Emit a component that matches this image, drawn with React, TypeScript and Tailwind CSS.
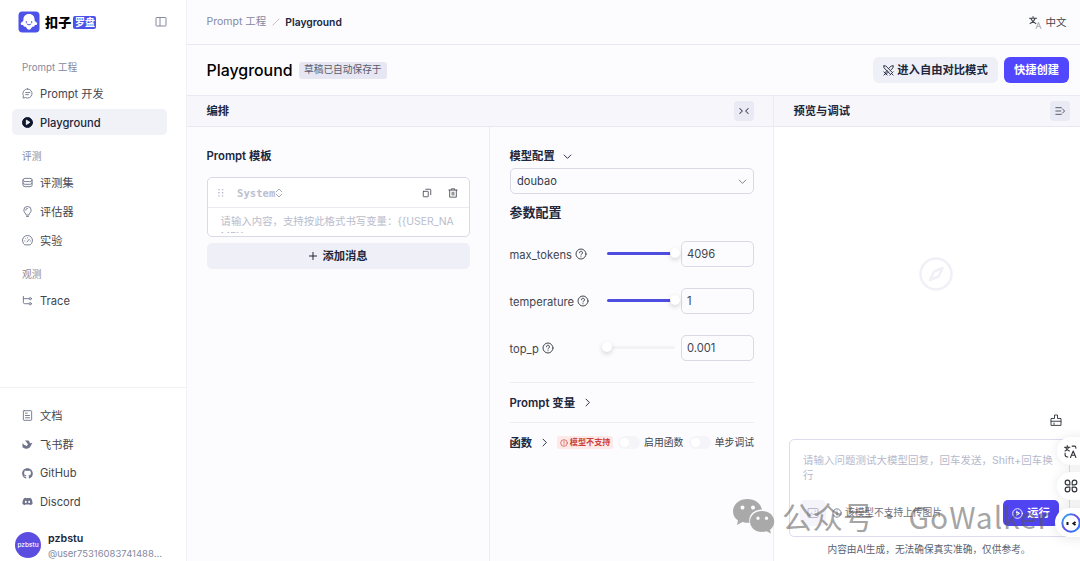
import React from 'react';
import { FaDiscord, FaGithub } from 'react-icons/fa';

interface IconProps {
  className?: string;
  children: React.ReactNode;
}

// Outline icons share a 24 unit grid
function Icon({ className = 'size-[11px]', children }: IconProps) {
  return (
    <svg
      viewBox="0 0 24 24"
      fill="none"
      stroke="currentColor"
      strokeWidth="2"
      strokeLinecap="round"
      strokeLinejoin="round"
      className={`shrink-0 ${className}`}
    >
      {children}
    </svg>
  );
}

function Label({ children }: { children: React.ReactNode }) {
  return <span className="pt-[2px]">{children}</span>;
}

const ChatIcon = () => (
  <Icon>
    <path d="M12 2a10 10 0 1 1-4.500 19L2.500 22l.6-5.200A10 10 0 0 1 12 2zM8 10h9M8 14.500h6" />
  </Icon>
);

const PlayIcon = () => (
  <Icon>
    <circle cx="12" cy="12" r="11" fill="currentColor" />
    <path d="M9.500 7.500v9l7-4.500z" fill="white" stroke="white" />
  </Icon>
);

const DatabaseIcon = () => (
  <Icon>
    <path d="M2 6q0-3 5-3h10q5 0 5 3v12q0 3-5 3H7q-5 0-5-3zM2 7q0 3 5 3h10q5 0 5-3M2 13q0 3 5 3h10q5 0 5-3" />
  </Icon>
);

const BulbIcon = () => (
  <Icon>
    <path d="M9 19c0-3-5-4-5-10a8 8 0 0 1 16 0c0 6-5 7-5 10zM10 23h4M8 9a4 4 0 0 1 4-4" />
  </Icon>
);

const GaugeIcon = () => (
  <Icon>
    <path d="M5.500 21a11 11 0 1 1 13 0zM11 15l5-6M6 13h.5M8 8l.5.5M12 6v.5M18 13h.5" />
  </Icon>
);

const TraceIcon = () => (
  <Icon>
    <path d="M3 3v13q0 3 3 3h9M3 8h12" />
    <circle cx="18" cy="8" r="2.500" />
    <circle cx="18" cy="19" r="2.500" />
  </Icon>
);

const DocIcon = () => (
  <Icon>
    <rect x="3" y="1.500" width="18" height="21" rx="1.500" />
    <path d="M7.500 7h4M7.500 12h9M7.500 17h9" />
  </Icon>
);

const FeishuIcon = () => (
  <Icon>
    <path
      d="M6 3h8c2 2 3 4 3.500 6l5.500-1c-2 2-3 6-5 9-4 6-12 5-17 1V9c3 3 6 5 9 6l3-3C11 8 9 5 6 3z"
      fill="currentColor"
      stroke="none"
    />
  </Icon>
);

const TranslateIcon = ({ className }: { className?: string }) => (
  <Icon className={className}>
    <path d="M1 4h13M7.500 1v3M2 14c5-2 8-6 9.500-10M3.500 5c2 4 5 7 9 9" />
    <path d="m13 23 4.500-11L22 23M14.500 19.500h6" className="opacity-40" />
  </Icon>
);

const NAV_GROUPS = [
  {
    title: 'Prompt 工程',
    items: [
      { label: 'Prompt 开发', icon: <ChatIcon /> },
      { label: 'Playground', icon: <PlayIcon />, active: true },
    ],
  },
  {
    title: '评测',
    items: [
      { label: '评测集', icon: <DatabaseIcon /> },
      { label: '评估器', icon: <BulbIcon /> },
      { label: '实验', icon: <GaugeIcon /> },
    ],
  },
  {
    title: '观测',
    items: [{ label: 'Trace', icon: <TraceIcon /> }],
  },
];

const LINKS = [
  { label: '文档', icon: <DocIcon /> },
  { label: '飞书群', icon: <FeishuIcon /> },
  { label: 'GitHub', icon: <FaGithub className="size-[11px]" /> },
  { label: 'Discord', icon: <FaDiscord className="size-[11px]" /> },
];

const PARAMS = [
  { name: 'max_tokens', value: '4096', percent: 100 },
  { name: 'temperature', value: '1', percent: 100 },
  { name: 'top_p', value: '0.001', percent: 0 },
];

interface NavItemProps {
  label: string;
  icon: React.ReactNode;
  active?: boolean;
}

function NavItem({ label, icon, active }: NavItemProps) {
  return (
    <a
      className={`flex h-[26px] items-center gap-[7px] rounded-[5px] px-[10px] text-[11.200px] ${
        active ? 'bg-[#f1f2f7] font-medium text-[#20263b]' : 'text-[#42464e]'
      }`}
    >
      <span className={`flex ${active ? 'text-[#0f172f]' : 'text-[#6f748c]'}`}>{icon}</span>
      <Label>{label}</Label>
    </a>
  );
}

function Sidebar() {
  return (
    <aside className="flex w-[187px] shrink-0 flex-col border-r border-[#f0f0f5] bg-white">
      <div className="flex h-[44px] shrink-0 items-center pr-[19px] pl-[18px]">
        <svg viewBox="0 0 22 22" className="size-[22px]">
          <rect x="0.500" y="0.500" width="21" height="21" rx="4" fill="#4d53e8" />
          <path
            d="M11 3c3.800 0 5.600 2.500 5.600 5.700 0 1 .2 1.700 1.400 2.300 2 1 1.500 3.500-1.200 3-.2 1.500-1.200 2-2.200 1.500-.7 1-1.500 1.500-1.800 2.500-1 .9-2.600.9-3.600 0-.3-1-1.100-1.500-1.800-2.500-1 .5-2 0-2.200-1.500-2.700.5-3.200-2-1.200-3 1.200-.6 1.400-1.300 1.400-2.300C5.400 5.500 7.200 3 11 3z"
            fill="white"
          />
          <path
            d="M8.300 10.500v1M13.700 10.500v1M9 13c1 1.200 3 1.200 4 0"
            fill="none"
            stroke="#4d53e8"
            strokeWidth="1"
            strokeLinecap="round"
          />
        </svg>
        <span className="ml-[5px] text-[13px] font-black tracking-[0.200px] text-black">扣子</span>
        <span className="ml-[2px] flex h-[13px] items-center rounded-[2px] bg-[#4d53e8] px-[1.500px] text-[10px] font-bold text-white">
          罗盘
        </span>
        <span className="ml-auto text-[#8489a0]">
          <svg viewBox="0 0 12 12" className="size-[12px]" fill="none" stroke="currentColor">
            <rect x="1" y="1.500" width="10" height="8.500" rx="0.500" />
            <path d="M5 1.500v8.500" />
          </svg>
        </span>
      </div>

      <nav className="flex flex-col pt-[13px] pr-[19px] pl-[12px]">
        {NAV_GROUPS.map((group) => (
          <div key={group.title} className="mb-[10.700px] flex flex-col gap-[3.200px]">
            <div className="flex h-[20px] items-center px-[10px] text-[9.700px] text-[#8589a0]">
              <Label>{group.title}</Label>
            </div>
            {group.items.map((item) => (
              <NavItem key={item.label} {...item} />
            ))}
          </div>
        ))}
      </nav>

      <div className="mt-auto flex h-[174px] flex-col gap-[3.300px] border-t border-[#f0f0f5] pt-[14.500px] pr-[19px] pl-[12px]">
        {LINKS.map((item) => (
          <NavItem key={item.label} {...item} />
        ))}
        <div className="mt-[11px] ml-[3px] flex items-center gap-[7px]">
          <div className="flex size-[26px] shrink-0 items-center justify-center rounded-full bg-[#5a4de0] text-[6.500px] font-medium text-white">
            pzbstu
          </div>
          <div className="flex flex-col pt-[3px] whitespace-nowrap">
            <span className="text-[10.700px] leading-[14px] font-semibold text-[#20263b]">pzbstu</span>
            <span className="text-[9.500px] leading-[15px] text-[#8589a0]">@user75316083741488...</span>
          </div>
        </div>
      </div>
    </aside>
  );
}

interface PanelHeaderProps {
  title: string;
  icon: React.ReactNode;
  className?: string;
}

function PanelHeader({ title, icon, className = 'pr-[20px]' }: PanelHeaderProps) {
  return (
    <div
      className={`flex h-[32px] shrink-0 items-center justify-between border-y border-[#e9e9f3] bg-[#f6f6fb] pl-[19.500px] text-[11.300px] font-semibold text-[#20263b] ${className}`}
    >
      <Label>{title}</Label>
      <button className="flex size-[20px] items-center justify-center rounded-[4px] bg-[#eaeaf4] text-[#3b4056]">
        {icon}
      </button>
    </div>
  );
}

function PromptTemplate() {
  return (
    <section className="w-[302px] shrink-0 pt-[20px] pr-[19px] pl-[20px]">
      <h2 className="-ml-[0.500px] text-[11.300px] leading-[18px] font-semibold text-[#20263b]">Prompt 模板</h2>
      <div className="mt-[12px] h-[60px] overflow-hidden rounded-[5px] border border-[#d9d9e8] bg-white">
        <div className="flex h-[30px] items-center border-b border-[#ebebf2] pr-[11px] pl-[10px]">
          <svg viewBox="0 0 6 10" className="mr-[13px] h-[9px] w-[6px] text-[#b5b9cb]" fill="currentColor">
            <path d="M0 1h1.500v1.500H0zM4 1h1.500v1.500H4zM0 4.500h1.500V6H0zM4 4.500h1.500V6H4zM0 8h1.500v1.500H0zM4 8h1.500v1.500H4z" />
          </svg>
          <span className="pt-[1px] font-['DejaVu_Sans_Mono','Liberation_Mono',monospace] text-[10.600px] font-bold text-[#bcc0d0]">
            System
          </span>
          <svg viewBox="0 0 8 10" className="h-[10px] w-[8px] text-[#a9adc0]" fill="none" stroke="currentColor">
            <path d="M1 4l3-3 3 3M1 6l3 3 3-3" />
          </svg>
          <span className="ml-auto flex gap-[16px] text-[#42464e]">
            <Icon className="size-[10px]">
              <rect x="3" y="8" width="12" height="13" rx="1" />
              <path d="M9 3h10q2 0 2 2v11" />
            </Icon>
            <Icon className="size-[10px]">
              <path d="M2 5h20M8 4V2h8v2M4 5v17h16V5M10 10v7M14 10v7" />
            </Icon>
          </span>
        </div>
        <div className="mt-[6px] h-[19px] overflow-hidden pl-[12.500px] text-[10.420px] leading-[15px] whitespace-nowrap text-[#b9bccb]">
          请输入内容，支持按此格式书写变量：{'{{USER_NA'}
          <br />
          {'ME}}'}
        </div>
      </div>
      <button className="mt-[6px] flex h-[26px] w-full items-center justify-center gap-[5px] rounded-[5px] bg-[#efeff8] text-[11.300px] font-semibold text-[#20263b]">
        <Icon className="size-[8px]">
          <path d="M12 1v22M1 12h22" strokeWidth="3" />
        </Icon>
        <Label>添加消息</Label>
      </button>
    </section>
  );
}

function Chevron({ className = '' }: { className?: string }) {
  return (
    <Icon className={`size-[9px] ${className}`}>
      <path d="m3 8 9 9 9-9" strokeWidth="2.500" />
    </Icon>
  );
}

function ParamRow({ name, value, percent }: { name: string; value: string; percent: number }) {
  return (
    <div className="flex h-[27px] items-center">
      <label className="flex w-[97px] items-center gap-[3px] pt-[2px] text-[11.200px] text-[#42464e]">
        <Label>{name}</Label>
        <Icon className="size-[12px]">
          <circle cx="12" cy="12" r="10" />
          <path d="M9 9.500a3 3 0 1 1 4.500 2.500c-1 .6-1.500 1-1.500 2M12 17.500v.1" />
        </Icon>
      </label>
      <div className="relative h-[3px] w-[68px] rounded-full bg-[#f3f3f6]">
        <div className="h-full rounded-full bg-[#4d4de0]" style={{ width: `${percent}%` }} />
        <div
          className="absolute -top-[4px] size-[10px] -translate-x-1/2 rounded-full bg-white shadow-[0_2px_5px_rgba(0,0,0,0.16)]"
          style={{ left: `${percent}%` }}
        />
      </div>
      <div className="ml-auto flex h-[26px] w-[73px] items-center rounded-[5px] border border-[#d9d9e8] px-[5px] text-[11.200px] text-[#42464e]">
        <Label>{value}</Label>
      </div>
    </div>
  );
}

function Toggle({ label }: { label: string }) {
  return (
    <label className="flex items-center gap-[4px] text-[9.800px] whitespace-nowrap text-[#42464e]">
      <span className="flex h-[13px] w-[22px] items-center rounded-full bg-[#f5f5f9] pl-[2px]">
        <span className="size-[9px] rounded-full bg-white" />
      </span>
      <span className="pt-[1px]">{label}</span>
    </label>
  );
}

function ModelConfig() {
  return (
    <section className="flex min-w-0 flex-1 flex-col border-l border-[#ececf4] pt-[20px] pr-[19px] pl-[19.500px]">
      <h2 className="flex items-center gap-[8px] text-[11.300px] leading-[18px] font-semibold text-[#20263b]">
        模型配置 <Chevron />
      </h2>
      <div className="mt-[3px] flex h-[26px] shrink-0 items-center justify-between rounded-[5px] border border-[#d9d9e8] px-[6.500px] text-[11.100px] text-[#35394a]">
        <Label>doubao</Label>
        <Chevron className="text-[#777b8c]" />
      </div>
      <h2 className="mt-[9px] text-[13px] leading-[19px] font-semibold text-[#20263b]">参数配置</h2>
      <div className="mt-[18px] flex flex-col gap-[20px]">
        {PARAMS.map((param) => (
          <ParamRow key={param.name} {...param} />
        ))}
      </div>
      <div className="mt-[21px] flex h-[41px] shrink-0 items-center gap-[8px] border-y border-[#ececf2] text-[11.400px] font-semibold text-[#20263b]">
        <Label>Prompt 变量</Label> <Chevron className="-rotate-90" />
      </div>
      <div className="flex h-[39px] items-center text-[11.300px] font-semibold whitespace-nowrap text-[#20263b]">
        <Label>函数</Label>
        <Chevron className="ml-[8px] -rotate-90" />
        <span className="mr-[5px] ml-[8px] flex h-[13px] w-[56px] items-center justify-center gap-[2px] rounded-[2px] bg-[#fde9e8] text-[8.100px] text-[#cc423b]">
          <Icon className="size-[8px]">
            <circle cx="12" cy="12" r="10" />
            <path d="M12 6v7M12 17v.5" />
          </Icon>
          模型不支持
        </span>
        <span className="flex flex-1 justify-between font-normal">
          <Toggle label="启用函数" />
          <Toggle label="单步调试" />
        </span>
      </div>
    </section>
  );
}

function Preview() {
  return (
    <section className="flex w-[307px] shrink-0 flex-col border-l border-[#ececf4] bg-white">
      <PanelHeader
        title="预览与调试"
        className="pr-[10px]"
        icon={
          <Icon className="size-[10px]">
            <path d="M2 4h13M2 12h12M2 20h13M18 7l5 5-5 5" />
          </Icon>
        }
      />
      <div className="flex flex-1 items-center justify-center pt-[7px] pl-[17px]">
        <svg viewBox="0 0 34 34" className="size-[34px] text-[#f0f0f6]" fill="none" stroke="currentColor" strokeWidth="2.500">
          <circle cx="17" cy="17" r="15.500" />
          <path d="m23.500 11-8.500 3.500L11 23l8.500-3.500z" strokeLinejoin="round" />
        </svg>
      </div>
      <div className="flex h-[25px] justify-end pr-[18px] text-[#42464e]">
        <Icon className="size-[12px]">
          <path d="M2 22V9h7V2h6v7h7v13zM2 14.500h20M8 18v3" />
        </Icon>
      </div>
      <div className="ml-[15px] flex h-[98px] w-[281px] flex-col justify-between rounded-[5px] border border-[#dcdcec] pt-[13px] pr-[10px] pb-[10px] pl-[13px]">
        <p className="-mr-[6px] text-[10.480px] leading-[15px] tracking-[0.030px] whitespace-nowrap text-[#b5b9cb]">
          请输入问题测试大模型回复，回车发送，Shift+回车换
          <br />行
        </p>
        <div className="flex items-center">
          <div className="-ml-[3px] flex size-[26px] items-center justify-center rounded-[5px] bg-[#f4f4fa] text-[#b5b9cb]">
            <Icon className="size-[12px]">
              <rect x="2" y="3" width="20" height="18" rx="2" />
              <path d="m4 17 5-5 4 4 3-3 4 4M16 8h1" />
            </Icon>
          </div>
          <span className="ml-[6px] flex items-center gap-[3px] text-[9.700px] text-[#6b6f82]">
            <Icon className="size-[10px]">
              <circle cx="12" cy="12" r="10" />
              <path d="M12 11v6M12 7v.5" />
            </Icon>
            该模型不支持上传图片
          </span>
          <button className="ml-auto flex h-[26px] w-[56px] items-center justify-center gap-[4px] rounded-[5px] bg-[#4f43f2] text-[11.300px] font-semibold text-white">
            <Icon>
              <circle cx="12" cy="12" r="10.500" />
              <path d="M10 8v8l6-4z" fill="currentColor" />
            </Icon>
            <Label>运行</Label>
          </button>
        </div>
      </div>
      <p className="flex h-[24px] items-center pl-[53.500px] text-[9.700px] text-[#5b5f70]">
        <Label>内容由AI生成，无法确保真实准确，仅供参考。</Label>
      </p>
    </section>
  );
}

function FloatingTools() {
  return (
    <>
      <div className="absolute top-[437px] left-[1057px] flex h-[28px] w-[40px] items-center rounded-full bg-white pl-[7px] text-[#30323a] shadow-[0_0_12px_rgba(0,0,0,0.09)]">
        <Icon className="size-[13px]">
          <path d="M1 4h10M6 1v3M2 11c4-2 6-4 7-7M3 5c2 3 4 5 7 6M15 2h5q2 0 2 4M2 15v3q0 4 5 4" />
          <path d="m12 23 5-12 5 12M14 19h6" />
        </Icon>
      </div>
      <div className="absolute top-[472px] left-[1057px] flex h-[28px] w-[40px] items-center rounded-full bg-white pl-[7px] text-[#30323a] shadow-[0_0_12px_rgba(0,0,0,0.09)]">
        <Icon className="size-[14px]">
          <path d="M10 10H6a4 4 0 1 1 4-4zM14 10V6a4 4 0 1 1 4 4zM10 14v4a4 4 0 1 1-4-4zM14 14h4a4 4 0 1 1-4 4z" />
        </Icon>
      </div>
      <div className="absolute top-[508px] left-[1055px] flex h-[29px] w-[42px] items-center rounded-full bg-white pl-[6px] shadow-[0_0_14px_rgba(0,0,0,0.12)]">
        <svg viewBox="0 0 20 20" className="size-[20px]">
          <defs>
            <linearGradient id="ring" x1="0" y1="0" x2="1" y2="1">
              <stop offset="0" stopColor="#1cbcf4" />
              <stop offset="0.450" stopColor="#6845f0" />
              <stop offset="1" stopColor="#1686ff" />
            </linearGradient>
          </defs>
          <circle cx="10" cy="10" r="8.700" fill="white" stroke="url(#ring)" strokeWidth="2" />
          <path d="M6.500 9v3M14.500 9l-2 1.500 2 1.500" fill="none" stroke="#15171d" strokeWidth="2" />
        </svg>
      </div>
    </>
  );
}

function Watermark() {
  return (
    <div className="pointer-events-none absolute top-[495px] left-[732px] flex h-[42px] items-center font-['Noto_Sans_CJK_SC',sans-serif] whitespace-nowrap text-[#565656]/55">
      <svg viewBox="0 0 43 36" className="h-[36px] w-[43px]">
        <path
          fill="#a9a9a9"
          fillRule="evenodd"
          d="M15.500 1C7 1 1 6.500 1 13.500c0 4 2 7 5 9L5 27l5.500-3c2 .7 5 1 7 .8C16 17 22 11.500 30 11.500 28.500 5 22.500 1 15.500 1zM10.500 7.500a2 2 0 1 1 0 4 2 2 0 0 1 0-4zM21 7.500a2 2 0 1 1 0 4 2 2 0 0 1 0-4z"
        />
        <path
          fill="#a9a9a9"
          fillRule="evenodd"
          d="M30 13c-7 0-12 4.700-12 10.500S23 34 30 34c1.500 0 3-.3 4.500-.7L39 35.500 38 32c2.500-2 4.300-5 4.300-8.500C42.300 17.700 37 13 30 13zM26 18.500a1.700 1.700 0 1 1 0 3.400 1.700 1.700 0 0 1 0-3.400zM34.500 18.500a1.700 1.700 0 1 1 0 3.400 1.700 1.700 0 0 1 0-3.400z"
        />
      </svg>
      <span className="ml-[7px] text-[30.500px]">公众号</span>
      <span className="ml-[11px] flex w-[10px] justify-center font-['Noto_Sans',sans-serif] text-[30px] font-bold">·</span>
      <span className="ml-[14px] text-[30px] tracking-[0.900px]">GoWalker</span>
    </div>
  );
}

export default function App() {
  return (
    <div className="relative flex h-[561px] w-[1080px] overflow-hidden bg-[#fcfcff] font-['Inter','Noto_Sans_CJK_SC',sans-serif] leading-none">
      <Sidebar />
      <main className="flex min-w-0 flex-1 flex-col">
        <div className="flex h-[44px] shrink-0 items-center px-[19.500px] text-[10.500px] text-[#8589a0]">
          <span className="pt-[1px]">Prompt 工程</span>
          <svg viewBox="0 0 8 8" className="mx-[5.500px] size-[8px]" fill="none" stroke="#c0c2d2">
            <path d="M0.500 7.500l7-7" />
          </svg>
          <span className="pt-[1px] text-[10.300px] font-semibold text-[#20263b]">Playground</span>
          <span className="mr-[-6px] ml-auto flex items-center gap-[4px] text-[#42464e]">
            <TranslateIcon className="size-[13px]" />
            <Label>中文</Label>
          </span>
        </div>
        <header className="flex h-[51px] shrink-0 items-center border-t border-[#e9e9f3] pr-[11px] pl-[19.500px]">
          <h1 className="pt-[2px] text-[15.900px] font-medium text-black">Playground</h1>
          <span className="ml-[6.500px] flex h-[17px] items-center rounded-[3px] bg-[#e6e7f2] px-[5px] text-[9.700px] text-[#575c70]">
            草稿已自动保存于
          </span>
          <button className="ml-auto flex h-[26px] w-[125px] items-center justify-center gap-[3px] rounded-[6px] bg-[#efeff7] text-[11.300px] font-semibold text-[#20263b]">
            <Icon className="size-[11px]">
              <path d="M2 2h4l13 13M2 2v4l13 13M2 15l7 7M2 22l5-5M15 22l7-7M18 18l4 4M22 2h-4l-5 5M22 2v4l-5 5M9 12l-5 5M12 15l-5 5" />
            </Icon>
            <Label>进入自由对比模式</Label>
          </button>
          <button className="ml-[6px] flex h-[26px] w-[65px] items-center justify-center rounded-[6px] bg-[#5147ff] text-[11.300px] font-semibold text-white">
            <Label>快捷创建</Label>
          </button>
        </header>
        <div className="flex min-h-0 flex-1">
          <div className="flex min-w-0 flex-1 flex-col">
            <PanelHeader
              title="编排"
              className="pr-[19px]"
              icon={
                <Icon className="size-[10px]">
                  <path d="m2 6 6 6-6 6M22 6l-6 6 6 6" strokeWidth="2.500" />
                </Icon>
              }
            />
            <div className="flex min-h-0 flex-1">
              <PromptTemplate />
              <ModelConfig />
            </div>
          </div>
          <Preview />
        </div>
      </main>
      <Watermark />
      <FloatingTools />
    </div>
  );
}
